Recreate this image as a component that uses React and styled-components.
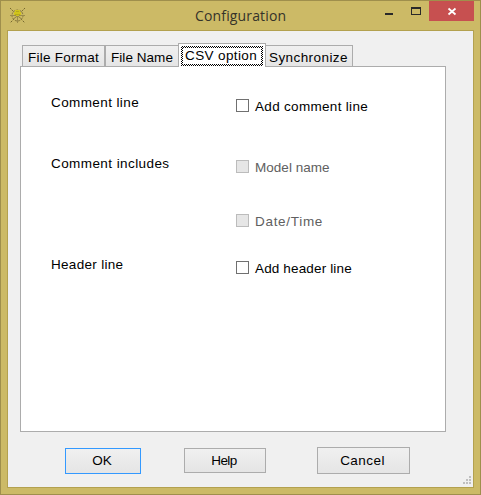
import React from 'react';
import styled, { createGlobalStyle } from 'styled-components';

const GlobalStyle = createGlobalStyle`
  * { box-sizing: border-box; }
  body { margin: 0; overflow: hidden; }
`;

const Window = styled.div`
  width: 481px;
  height: 495px;
  display: flex;
  flex-direction: column;
  padding: 0 6px 6px;
  border: 1px solid #9f8f4c;
  background: #ccba66;
  color: #000;
  font: 13.5px/16px "Liberation Sans", Arial, sans-serif;
`;

const TitleBar = styled.header`
  height: 29px;
  flex: none;
  display: grid;
  grid-template-columns: 22px 1fr 119px 45px;
  align-items: start;
`;

const AppIcon = styled.svg`
  margin: 6px 0 0 2px;
`;

const Title = styled.h1`
  margin: 5px 0 0;
  padding-left: 166px;
  font: 400 14px/20px "Open Sans", "Noto Sans", sans-serif;
  letter-spacing: 0.15px;
  color: #35332a;
  white-space: nowrap;
`;

const CaptionTools = styled.div`
  display: flex;
  justify-content: flex-end;
`;

const CaptionButton = styled.button`
  width: ${(p) => p.$width}px;
  height: 20px;
  padding: 0;
  border: 0;
  display: flex;
  background: ${(p) => (p.$close ? '#c75050' : 'transparent')};
`;

const Client = styled.main`
  flex: 1;
  display: flex;
  flex-direction: column;
  border: 1px solid #b3a14f;
  background: #f0f0f0;
`;

const TabList = styled.nav`
  height: 23px;
  margin: 12px 0 0 14px;
  display: flex;
  align-items: flex-end;
`;

const Tab = styled.button`
  height: ${(p) => (p.$selected ? 24 : 21)}px;
  width: ${(p) => p.$width}px;
  flex: none;
  padding: ${(p) => (p.$selected ? '2px' : `4px 0 0 ${p.$inset || 5}px`)};
  margin: 0 0 ${(p) => (p.$selected ? -1 : 0)}px ${(p) => (p.$joined ? -1 : 0)}px;
  border: 1px solid #acacac;
  border-bottom: 0;
  display: flex;
  position: relative;
  z-index: ${(p) => (p.$selected ? 1 : 0)};
  background: ${(p) => (p.$selected ? '#fff' : 'linear-gradient(#f0f0f0, #e5e5e5)')};
  color: #000;
  font: inherit;
  text-align: left;
`;

const FocusFrame = styled.span`
  width: 82px;
  height: 20px;
  padding: 2px;
  display: flex;
  background: repeating-conic-gradient(#000 0 25%, #fff 0 50%) 0 0 / 2px 2px;
`;

const FocusFill = styled.span`
  flex: 1;
  padding-left: 2px;
  background: #fff;
`;

const Label = styled.span`
  display: block;
  letter-spacing: ${(p) => p.$track || 0}px;
  white-space: nowrap;
`;

const Panel = styled.section`
  width: 426px;
  height: 366px;
  flex: none;
  margin-left: 12px;
  padding: 28px 0 0 30px;
  border: 1px solid #acacac;
  background: #fff;
`;

const OptionRow = styled.div`
  height: ${(p) => p.$height}px;
  display: grid;
  grid-template-columns: 185px 1fr;
  align-items: start;
`;

const CheckOption = styled.label`
  display: flex;
  gap: 6px;
  padding-top: 4px;
  color: ${(p) => (p.$disabled ? '#606060' : '#000')};
`;

const CheckBox = styled.input.attrs({ type: 'checkbox' })`
  appearance: none;
  width: 13px;
  height: 13px;
  margin: 0;
  border: 1px solid #707070;
  background: #fff;
  &:disabled { border-color: #bcbcbc; background: #e6e6e6; }
`;

const Footer = styled.footer`
  flex: 1;
  display: flex;
  align-items: flex-start;
  padding: 15px 1px 0 57px;
`;

const Button = styled.button`
  width: ${(p) => p.$width}px;
  height: ${(p) => p.$height}px;
  flex: none;
  margin: ${(p) => p.$top || 0}px ${(p) => p.$gap}px 0 0;
  padding: 0 2px 0 0;
  border: 1px solid ${(p) => (p.$primary ? '#3399ff' : '#acacac')};
  background: linear-gradient(#f0f0f0, #e5e5e5);
  color: #000;
  font: inherit;
`;

const Grip = styled.svg`
  margin: 29px 0 0 auto;
`;

const rows = [
  { title: 'Comment line', track: 0.4, option: 'Add comment line', optionTrack: 0.31, height: 61 },
  { title: 'Comment includes', track: 0.42, option: 'Model name', optionTrack: 0.03, height: 54, disabled: true },
  { title: '', option: 'Date/Time', optionTrack: 0.7, height: 47, disabled: true },
  { title: 'Header line', track: 0.3, option: 'Add header line', optionTrack: 0.15, height: 30 },
];

export default function App() {
  return (
    <>
      <GlobalStyle />
      <Window>
        <TitleBar>
          <AppIcon width="17" height="17" viewBox="0 0 17 17" fill="none">
            <path d="M1 1l15 15M16 1L1 16" stroke="#74672f" strokeDasharray="2 1" />
            <circle cx="8.5" cy="8.5" r="5.5" stroke="#857639" strokeDasharray="2 1" />
            <path d="M1 8.5h15M8.5 3v13M4 12l4.5-3 4.5 3" stroke="#9b8b4b" />
            <path d="M6 3h5v2h1v3h-2v1H7V8H5V5h1z" fill="#d1c51a" />
            <path d="M7 4.5h3M6 7.5h5" stroke="#b5a91c" />
          </AppIcon>
          <Title>Configuration</Title>
          <CaptionTools>
            <CaptionButton $width={28} aria-label="Minimize">
              <svg width="28" height="20"><path d="M5 12h8v2H5z" fill="#292929" /></svg>
            </CaptionButton>
            <CaptionButton $width={21} aria-label="Maximize">
              <svg width="21" height="20"><path fillRule="evenodd" d="M3 6h10v8H3zM4 8v5h8V8z" fill="#292929" /></svg>
            </CaptionButton>
          </CaptionTools>
          <CaptionButton $width={45} $close aria-label="Close">
            <svg width="45" height="20"><path d="M19.5 7.5l7 6M26.5 7.5l-7 6" stroke="#fff" strokeWidth="1.8" /></svg>
          </CaptionButton>
        </TitleBar>
        <Client>
          <TabList>
            <Tab $width={83}><Label $track={0.25}>File Format</Label></Tab>
            <Tab $width={74}><Label $track={0.05}>File Name</Label></Tab>
            <Tab $width={88} $selected $joined>
              <FocusFrame><FocusFill><Label $track={0.38}>CSV option</Label></FocusFill></FocusFrame>
            </Tab>
            <Tab $width={88} $inset={3} $joined><Label $track={0.42}>Synchronize</Label></Tab>
          </TabList>
          <Panel>
            {rows.map((row) => (
              <OptionRow key={row.option} $height={row.height}>
                <Label $track={row.track}>{row.title}</Label>
                <CheckOption $disabled={row.disabled}>
                  <CheckBox disabled={row.disabled} />
                  <Label $track={row.optionTrack}>{row.option}</Label>
                </CheckOption>
              </OptionRow>
            ))}
          </Panel>
          <Footer>
            <Button $width={76} $height={26} $gap={43} $top={1} $primary>OK</Button>
            <Button $width={82} $height={25} $gap={51} $top={1}><Label $track={-0.6}>Help</Label></Button>
            <Button $width={93} $height={27} $gap={0}><Label $track={0.45}>Cancel</Label></Button>
            <Grip width="9" height="9" fill="#bfbfbf">
              <path d="M6 0h2v2H6zM3 3h2v2H3zM6 3h2v2H6zM0 6h2v2H0zM3 6h2v2H3zM6 6h2v2H6z" />
            </Grip>
          </Footer>
        </Client>
      </Window>
    </>
  );
}
